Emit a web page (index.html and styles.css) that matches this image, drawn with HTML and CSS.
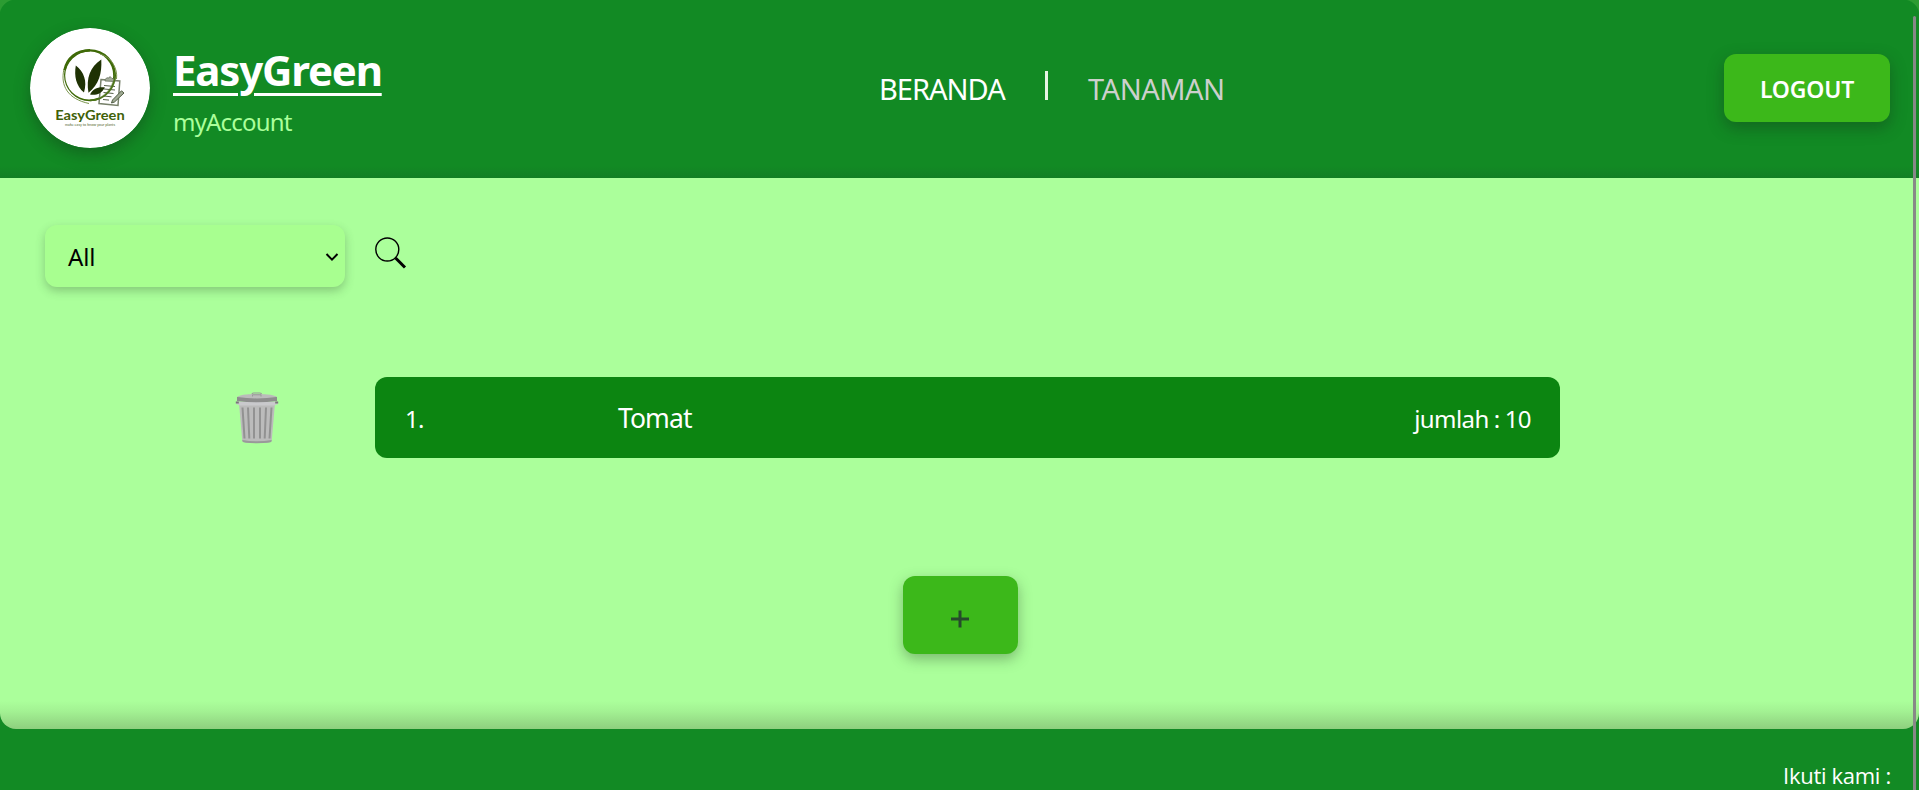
FILE: index.html
```html
<!DOCTYPE html>
<html lang="id">
<head>
<meta charset="utf-8">
<title>EasyGreen</title>
<link rel="stylesheet" href="styles.css">
</head>
<body>
<header class="header">
  <div class="brand">
    <svg class="logo" viewBox="0 0 120 120">
      <circle cx="60" cy="60" r="60" fill="#fff"/>
      <path d="M60 21.200a26 26 0 1 0 26 26.400A26 26 0 0 0 60 21.200zm0 2.300a24 24 0 1 1-24.800 24A24.500 24.500 0 0 1 60 23.500z" fill="#3f6a08"/>
      <path d="M34 41C30 58 38 71 59 75.500M70 26C81 29 88 40 86.500 51" fill="none" stroke="#7c964f" stroke-width="1"/>
      <path d="M34.500 42C37 30 46 22.500 60 22.300" fill="none" stroke="#3f6a08" stroke-width="2.400"/>
      <path d="M71 51.500 89.800 53 88 77.500 69 75.500z" fill="#fff" fill-opacity=".55" stroke="#77816a" stroke-width="1.500"/>
      <path d="M75 51.500 77 49.800 79 50 80 48.500 82 50.500 84.500 50.800 85 53.500 75 53z" fill="#a5ad9b" stroke="#66715a" stroke-width=".8"/>
      <path d="M74 57.500l11 1M74 61l11 1M73.500 64.500l10 1M73.500 68l8 .8M73 71.500l6 .6" stroke="#56614a" stroke-width="1"/>
      <path d="M60 72.500A25 25 0 0 0 84.500 44" fill="none" stroke="#4c7419" stroke-width="1.600"/>
      <path d="M45.800 37.500C54 44 57.500 53 54 64.500 46 58 44 48 45.800 37.500zM71.300 31.500C72 46 69 56 58.500 64.800 56 50 60 39 71.300 31.500zM75 59.500C71 66 66 67.500 60 66.500 63 61 68 58.500 75 59.500z" fill="#1f3204"/>
      <path d="M82.500 72 81.500 75 84.500 74 94 65 91.500 62.800z" fill="#a0aa94" stroke="#4f5b42" stroke-width="1"/>
      <text class="logo-name" x="25.200" y="91.700" textLength="69.500" lengthAdjust="spacingAndGlyphs">EasyGreen</text>
      <text class="logo-tag" x="35" y="98" textLength="50" lengthAdjust="spacingAndGlyphs">make easy to know your plants</text>
    </svg>
    <div class="brand-text">
      <h1 class="title">EasyGreen</h1>
      <span class="account">myAccount</span>
    </div>
  </div>
  <nav class="nav">
    <a class="nav-home">BERANDA</a>
    <span class="divider"></span>
    <a class="nav-plants">TANAMAN</a>
  </nav>
  <button class="logout"><span>LOGOUT</span></button>
</header>
<main class="main">
  <div class="filters">
    <div class="select"><span>All</span>
      <svg class="chevron" viewBox="0 0 14 10"><path d="M1.500 2 7 7.600 12.500 2" fill="none" stroke="#000" stroke-width="2"/></svg>
    </div>
    <svg class="search" viewBox="0 0 32 33"><circle cx="12.300" cy="12.500" r="11.500" fill="none" stroke="#000" stroke-width="1.400"/><path d="M20.600 21 30 30.500" stroke="#000" stroke-width="3"/></svg>
  </div>
  <div class="item">
    <svg class="trash" viewBox="0 0 44 52">
      <path d="M17 5V2.500Q17 1 18.500 1H25Q26.500 1 26.500 2.500V5" fill="none" stroke="#999" stroke-width="1.200"/>
      <path d="M4 11 7.300 49Q7.500 51 22 51T36.700 49L40 11z" fill="#bbb"/>
      <path d="M7.300 48Q22 50.500 36.700 48L36.500 49.500Q36 51.200 22 51.200T7.500 49.500z" fill="#999"/>
      <path d="M1 9.500H43V12L39 13.500H5L1 12z" fill="#c9c9cc"/>
      <path d="M.8 9.600h3v1.800h-3zM40.200 9.600h3v1.800h-3z" fill="#777"/>
      <path d="M2 5Q22 .5 42 5V9Q22 11.500 2 9z" fill="#8d8d8d"/>
      <path d="M2.500 5Q5 2 22 2t19.500 3Q22 7.800 2.500 5z" fill="#bbb"/>
      <path d="M17.500 4.500V2.800h8.500v1.700" fill="none" stroke="#999"/>
      <path d="M7.500 15.500 9.500 46.500M13 15.500 14.300 46.500M19 15.500V46.500M25 15.500V46.500M31 15.500 29.700 46.500M36.500 15.500 34.500 46.500" stroke="#929292" stroke-width="2"/>
    </svg>
    <div class="plant">
      <span class="num">1.</span>
      <span class="name">Tomat</span>
      <span class="count">jumlah : 10</span>
    </div>
  </div>
  <button class="add"><svg class="plus" viewBox="0 0 18 18"><path d="M0 9H18M9 .5V17.500" stroke="#264a2c" stroke-width="3"/></svg></button>
</main>
<footer class="footer"><span class="follow">Ikuti kami :</span></footer>
<div class="scrollbar"></div>
</body>
</html>
```
FILE: styles.css
```css
* { box-sizing: border-box; }
body {
  margin: 0;
  height: 790px;
  overflow: hidden;
  display: flex;
  flex-direction: column;
  background: #128a24;
  font-family: "Noto Sans", "Open Sans", sans-serif;
  color: #fff;
}
button { border: 0; padding: 0; font: inherit; }
span, a, h1 { white-space: nowrap; }
.header {
  height: 178px;
  flex: none;
  display: grid;
  grid-template-columns: 879px 1fr 166px;
  padding-right: 29px;
  background:
    linear-gradient(to bottom, transparent 166px, rgba(20, 70, 35, .16)),
    radial-gradient(circle at 16px 16px, transparent 16px, #2c9c32 17px) 0 0 / 16px 16px no-repeat,
    radial-gradient(circle at 0 16px, transparent 16px, #2c9c32 17px) 100% 0 / 16px 16px no-repeat,
    #128a24;
}
.brand { display: flex; padding: 28px 0 0 30px; gap: 23px; }
.logo {
  width: 120px;
  height: 120px;
  border-radius: 50%;
  box-shadow: 0 6px 16px rgba(20, 50, 25, .4);
}
.logo-name { font: 700 12.500px Lato, sans-serif; fill: #3f6108; }
.logo-tag { font: 3.500px Lato, sans-serif; fill: #53692f; }
.brand-text { display: flex; flex-direction: column; padding-top: 12px; }
.title {
  margin: 0;
  font-size: 42px;
  line-height: 60px;
  font-weight: 700;
  letter-spacing: -1.200px;
  text-decoration: underline;
  text-decoration-thickness: 3px;
  text-underline-offset: 7px;
}
.account { font-size: 24px; line-height: 34px; margin-top: 5px; color: #abff9b; letter-spacing: -.8px; }
.nav { display: flex; align-items: flex-start; font-size: 29px; line-height: 40px; padding-top: 69px; }
.nav-home { width: 165px; letter-spacing: -1px; }
.divider { width: 3px; height: 29px; margin: 2px 40px 0 1px; background: #e6f5e4; }
.nav-plants { color: #ccd0cc; letter-spacing: -.5px; }
.logout {
  height: 68px;
  margin-top: 54px;
  padding-top: 2px;
  border-radius: 12px;
  background: #3cb81a;
  color: #fff;
  font-size: 23px;
  font-weight: 600;
  letter-spacing: -.2px;
  box-shadow: 0 6px 16px rgba(20, 50, 25, .4);
}
.main {
  height: 551px;
  flex: none;
  display: flex;
  flex-direction: column;
  background:
    linear-gradient(to bottom, transparent 523px, rgba(70, 90, 55, .08) 533px, rgba(70, 90, 55, .29)),
    #abff9b;
  border-radius: 0 0 16px 16px;
}
.filters { display: flex; height: 62px; margin: 47px 0 0 45px; }
.select {
  width: 300px;
  height: 62px;
  display: flex;
  align-items: center;
  justify-content: space-between;
  padding: 1px 6px 0 23px;
  border-radius: 12px;
  background: #a8ff90;
  color: #000;
  font-size: 24px;
  letter-spacing: -.2px;
  box-shadow: 0 4px 10px rgba(50, 80, 45, .3);
}
.chevron { width: 14px; height: 10px; }
.search { width: 32px; height: 33px; margin: 12px 0 0 30px; }
.item { display: flex; margin: 90px 0 0 235px; }
.trash { width: 44px; height: 52px; margin: 15px 96px 0 0; }
.plant {
  width: 1185px;
  height: 81px;
  display: grid;
  grid-template-columns: 213px 1fr auto;
  align-items: center;
  padding: 1px 29px 0 30px;
  border-radius: 12px;
  background: #0c8511;
  font-size: 24px;
}
.num { letter-spacing: -.8px; }
.name { font-size: 26.500px; letter-spacing: -.9px; }
.count { letter-spacing: -.6px; word-spacing: -.5px; }
.add {
  align-self: center;
  width: 115px;
  height: 78px;
  margin: 118px 0 0 2px;
  padding: 8px 2px 0 0;
  display: flex;
  align-items: center;
  justify-content: center;
  border-radius: 12px;
  background: #3cb81a;
  box-shadow: 0 5px 14px rgba(50, 80, 45, .4);
}
.plus { width: 18px; height: 18px; }
.footer { display: flex; justify-content: flex-end; padding: 30px 28px 0 0; }
.follow { font-family: "Open Sans", "Noto Sans", sans-serif; font-size: 22px; line-height: 32px; letter-spacing: -.3px; }
.scrollbar {
  position: absolute;
  left: 1913px;
  top: 16px;
  width: 3px;
  height: 774px;
  border-radius: 3px 3px 0 0;
  background: #888;
}
```
